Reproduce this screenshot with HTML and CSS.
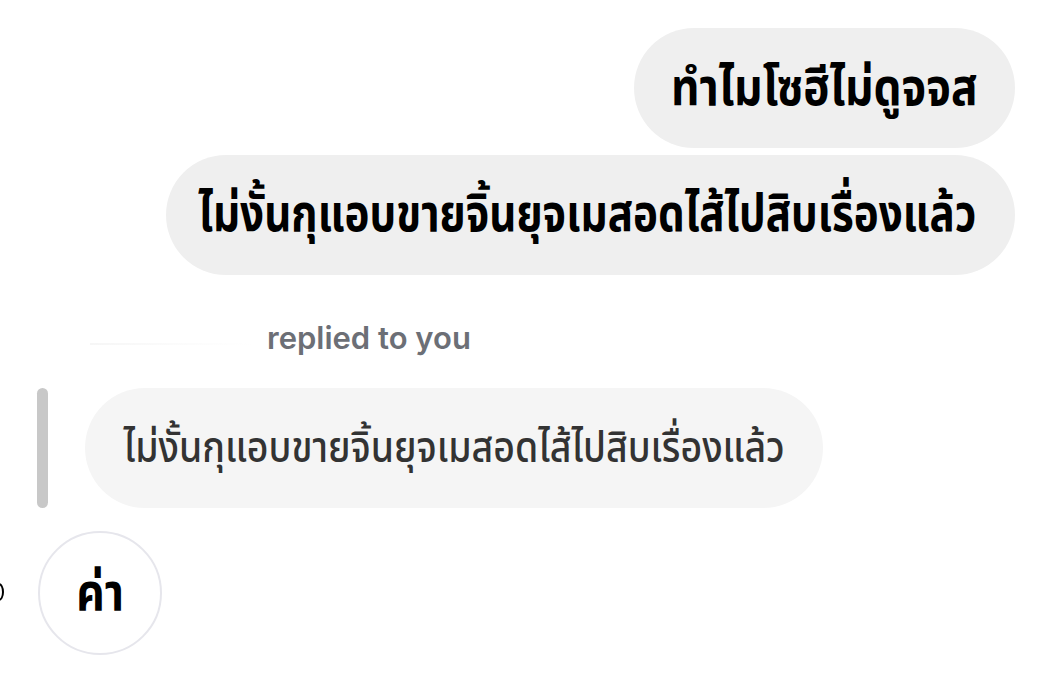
FILE: index.html
```html
<!DOCTYPE html>
<html lang="th">
<head>
<meta charset="utf-8">
<link rel="stylesheet" href="styles.css">
</head>
<body>
<div class="chat">
  <div class="row out">
    <div class="bubble b1"><span class="txt">ทำไมโซฮีไม่ดูจจส</span></div>
  </div>
  <div class="row out second">
    <div class="bubble b2"><span class="txt">ไม่งั้นกุแอบขายจิ้นยุจเมสอดไส้ไปสิบเรื่องแล้ว</span></div>
  </div>
  <div class="reply-label">
    <span class="name"></span>
    <span class="label-text">replied to you</span>
  </div>
  <div class="reply">
    <div class="bar"></div>
    <div class="bubble quoted"><span class="txt">ไม่งั้นกุแอบขายจิ้นยุจเมสอดไส้ไปสิบเรื่องแล้ว</span></div>
  </div>
  <div class="row in">
    <span class="edge"></span>
    <div class="circle"><span class="txt">ค่า</span></div>
  </div>
</div>
</body>
</html>
```
FILE: styles.css
```css
html, body {
  margin: 0;
  padding: 0;
  background: #ffffff;
}
.chat {
  width: 1039px;
  height: 683px;
  overflow: hidden;
  display: flex;
  flex-direction: column;
  font-family: "Noto Sans Thai", "Noto Sans", "Liberation Sans", sans-serif;
  padding-top: 28px;
  box-sizing: border-box;
}
.row {
  display: flex;
}
.row.out {
  justify-content: flex-end;
  padding-right: 24px;
}
.row.second {
  margin-top: 7px;
}
.bubble {
  height: 120px;
  border-radius: 60px;
  background: #efefef;
  display: flex;
  align-items: center;
  justify-content: center;
  font-size: 52px;
  font-weight: 700;
  color: #000;
  white-space: nowrap;
  box-sizing: border-box;
}
.txt {
  display: inline-block;
  white-space: nowrap;
  flex-shrink: 0;
}
.b1 {
  width: 381px;
}
.b1 .txt {
  transform: scaleX(0.85);
  margin-top: 2px;
}
.b2 {
  width: 849px;
}
.b2 .txt {
  transform: scaleX(0.81);
  margin-left: -6px;
}
.reply-label {
  display: flex;
  align-items: center;
  margin-top: 44px;
  height: 36px;
  padding-left: 90px;
}
.name {
  display: inline-block;
  width: 162px;
  height: 2px;
  background: linear-gradient(90deg, #f6f6f6, #fbfbfb 50%, #ffffff);
  margin-top: 14px;
}
.label-text {
  font-family: "Inter", "Liberation Sans", sans-serif;
  font-size: 31px;
  font-weight: 600;
  color: #6c6f76;
  margin-left: 15px;
}
.reply {
  display: flex;
  margin-top: 33px;
  padding-left: 37px;
  gap: 37px;
}
.bar {
  width: 11px;
  height: 120px;
  border-radius: 6px;
  background: #c8c8c8;
}
.bubble.quoted {
  width: 738px;
  background: #f5f5f5;
  color: #333333;
  font-size: 43px;
  font-weight: 500;
}
.quoted .txt {
  transform: scaleX(0.87);
}
.row.in {
  margin-top: 23px;
  padding-left: 38px;
  position: relative;
  align-items: center;
}
.edge {
  position: absolute;
  left: -6px;
  top: 52px;
  width: 10px;
  height: 18px;
  border-radius: 50%;
  border: 2px solid #000;
  box-sizing: border-box;
}
.circle {
  width: 124px;
  height: 124px;
  border-radius: 50%;
  border: 2px solid #e6e6ec;
  box-sizing: border-box;
  display: flex;
  align-items: center;
  justify-content: center;
  font-size: 52px;
  font-weight: 700;
  color: #000;
}
.circle .txt {
  transform: scaleX(0.85);
  margin-top: 2px;
}
```
